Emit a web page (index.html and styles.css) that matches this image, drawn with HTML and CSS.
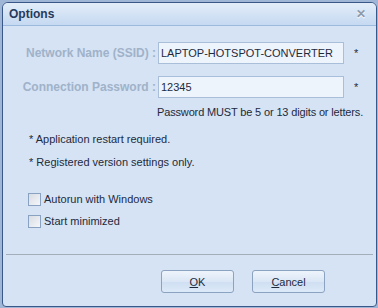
FILE: index.html
```html
<!DOCTYPE html>
<html>
<head>
  <title>Options</title>
  <link rel="stylesheet" href="styles.css">
</head>
<body>
  <div class="dialog">
    <div class="titlebar">
      <span class="title">Options</span>
      <span class="close">&#x2715;</span>
    </div>
    <div class="content">
      <div class="field-row">
        <label class="field-label">Network Name (SSID) :</label>
        <input class="field-input" type="text" value="LAPTOP-HOTSPOT-CONVERTER">
        <span class="star">*</span>
      </div>
      <div class="field-row">
        <label class="field-label">Connection Password :</label>
        <input class="field-input" type="text" value="12345">
        <span class="star">*</span>
      </div>
      <p class="note">Password MUST be 5 or 13 digits or letters.</p>

      <p class="info first">* Application restart required.</p>
      <p class="info">* Registered version settings only.</p>

      <div class="checks">
        <label class="check"><span class="box"></span>Autorun with Windows</label>
        <label class="check"><span class="box"></span>Start minimized</label>
      </div>
    </div>
    <div class="footer">
      <button class="btn"><u>O</u>K</button>
      <button class="btn"><u>C</u>ancel</button>
    </div>
  </div>
</body>
</html>
```
FILE: styles.css
```css
body{
  margin: 0;
  background-color: #9fb6d6;
  font-family: "Liberation Sans", Arial, sans-serif;
  font-size: 11px;
  line-height: 14px;
  color: #1e2a3c;
}

.dialog{
  margin: 2px 1px 1px 2px;
  height: 305px;
  box-sizing: border-box;
  border: 1px solid #3a5887;
  border-radius: 6px 6px 4px 4px;
  background-color: #d5e3f4;
  overflow: hidden;
  display: flex;
  flex-direction: column;
}

.titlebar{
  height: 22px;
  flex: none;
  display: flex;
  align-items: center;
  justify-content: space-between;
  padding: 0 10px 0 6px;
  background: linear-gradient(#e3edf9, #c5d9f1);
  border-bottom: 1px solid #9cb9de;
}

.title{
  font-weight: bold;
  font-size: 12px;
  color: #253b5b;
}

.close{
  color: #8f9bab;
  font-size: 12px;
  font-weight: bold;
  text-shadow: 0 1px 0 #ffffff;
}

.content{
  flex: 1;
  padding: 16px 0 0 0;
}

.field-row{
  display: flex;
  align-items: center;
  height: 22px;
  margin-bottom: 12px;
  white-space: nowrap;
}

.field-label{
  width: 153px;
  text-align: right;
  font-weight: bold;
  font-size: 12px;
  color: #a0b2c9;
  padding-right: 2px;
}

.field-input{
  width: 186px;
  height: 22px;
  box-sizing: border-box;
  border: 1px solid #a9bfd9;
  background-color: #eef4fc;
  font-family: "Liberation Sans", Arial, sans-serif;
  font-size: 11px;
  color: #1e2a3c;
  padding: 0 2px;
  margin: 0;
}

.star{
  margin-left: 10px;
  color: #1e2a3c;
}

.note{
  margin: -5px 0 0 154px;
  white-space: nowrap;
  letter-spacing: -0.15px;
}

.info{
  margin: 0 0 9px 26px;
}

.info.first{
  margin-top: 13px;
}

.checks{
  margin-top: 23px;
  padding-left: 25px;
}

.check{
  display: flex;
  align-items: center;
  height: 14px;
  margin-bottom: 8px;
}

.box{
  width: 11px;
  height: 11px;
  border: 1px solid #8aa2c2;
  background: linear-gradient(135deg, #d8dde4, #f4f6f9);
  margin-right: 3px;
}

.footer{
  flex: none;
  height: 52px;
  box-sizing: border-box;
  border-top: 1px solid #a4aeba;
  margin: 0 3px;
  display: flex;
  justify-content: flex-end;
  align-items: flex-start;
  padding: 15px 48px 0 0;
  gap: 18px;
}

.btn{
  width: 73px;
  height: 23px;
  border: 1px solid #8ba2c1;
  border-radius: 3px;
  background: linear-gradient(#eef4fb, #dbe7f6 50%, #cfdff2 51%, #dce9f8);
  font-family: "Liberation Sans", Arial, sans-serif;
  font-size: 11px;
  color: #1e2a3c;
  padding: 0;
}
```
